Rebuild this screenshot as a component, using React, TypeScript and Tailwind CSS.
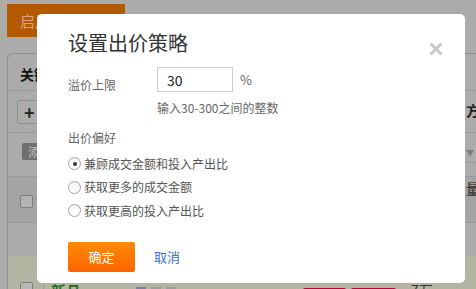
import React from 'react';

const Radio = ({ label, checked }: { label: string; checked?: boolean }) => (
  <label className="flex h-[23.5px] items-center">
    <span className="flex h-[13px] w-[13px] items-center justify-center rounded-full border border-[#a3a3a3] bg-gradient-to-b from-[#f4f4f4] to-white">
      {checked && <span className="h-[4px] w-[4px] rounded-full bg-[#333]" />}
    </span>
    <span className="ml-[3px] text-[12px] leading-[18px] text-[#555]">{label}</span>
  </label>
);

export default function App() {
  return (
    <div className="relative h-[289px] w-[476px] overflow-hidden bg-[#ababab] font-['Noto_Sans_CJK_SC',sans-serif]">
      {/* page behind the dialog (dimmed) */}
      <div className="flex h-[37px]">
        <div className="ml-[7px] mt-[4px] h-[33px] w-[118px] bg-[#b35900] pl-[13px] text-[15px] leading-[33px] text-[#d9a47a]">
          启用中
        </div>
      </div>
      <div className="ml-[7px] mt-[16px] rounded-tl-[6px] border-l border-t border-[#8e8e8e]">
        <div className="flex h-[37px] items-center border-b border-[#999] pl-[12px] pt-[4px]">
          <span className="text-[14px] font-bold text-[#111]">关键词</span>
        </div>
        <div className="flex h-[42px] justify-between border-b border-[#999]">
          <div className="ml-[9px] mt-[9px] flex h-[24px] w-[100px] items-center rounded-[3px] border border-[#8c8c8c] pl-[6px] text-[18px] font-bold leading-none text-[#222]">
            +
          </div>
          <span className="mt-[9px] w-[10px] overflow-hidden whitespace-nowrap text-[14px] font-bold text-[#222]">方式</span>
        </div>
        <div className="flex h-[43px] justify-between">
          <div className="ml-[14px] mt-[10px] h-[17px] w-[50px] rounded-[2px] bg-[#6e6e6e] pl-[6px] text-[12px] leading-[17px] text-[#c4c4c4]">
            添加
          </div>
          <div className="flex w-[10px] flex-col">
            <span className="mt-[16px] text-[8px] leading-none text-[#7c7c7c]">▼</span>
            <span className="mt-[5px] border-b border-[#999]" />
          </div>
        </div>
        <div className="flex h-[47px] justify-between border-y border-[#999] bg-[#a4a4a4]">
          <span className="ml-[12px] mt-[18px] h-[13px] w-[13px] rounded-[2px] border border-[#7e7e7e] bg-[#b3b3b3]" />
          <span className="mt-[1px] w-[10px] overflow-hidden text-[14px] font-bold text-[#444]">量</span>
        </div>
        <div className="h-[33px]" />
        <div className="flex h-[40px] bg-[#b4b4a2]">
          <span className="ml-[12px] mt-[26px] h-[13px] w-[13px] rounded-[2px] border border-[#7e7e7e] bg-[#b8b8b8]" />
          <span className="ml-[10px] border-l border-[#999]" />
          <span className="ml-[7px] mt-[24px] text-[15px] font-bold text-[#1e6a1e]">新品</span>
          <span className="ml-[55px] mt-[31px] h-[10px] w-[10px] bg-[#7b80a6]" />
          <span className="ml-[5px] mt-[31px] h-[10px] w-[10px] bg-[#9c9c9c]" />
          <span className="ml-[5px] mt-[31px] h-[10px] w-[10px] bg-[#9c9c9c]" />
          <span className="ml-[127px] mt-[32px] h-[10px] w-[43px] rounded-[2px] bg-[#c2003c]" />
          <span className="ml-[5px] mt-[32px] h-[10px] w-[45px] rounded-[2px] bg-[#c2003c]" />
          <span className="ml-[15px] mt-[24px] text-[14px] text-[#333]">7万</span>
        </div>
      </div>

      {/* dialog */}
      <div className="absolute left-[37px] top-[14px] h-[269px] w-[428px] rounded-[5px] bg-white pl-[31px] pt-[15px]">
        <button className="absolute right-[22px] top-[28px]">
          <svg width="14" height="14" viewBox="0 0 14 14">
            <path d="M1.5 1.5l11 11M12.5 1.5l-11 11" stroke="#c9c9c9" strokeWidth="3" />
          </svg>
        </button>

        <h2 className="text-[20px] leading-[28px] text-[#333]">设置出价策略</h2>

        <div className="mt-[10px] flex">
          <span className="mt-[9px] w-[89px] text-[12px] leading-[18px] text-[#666]">溢价上限</span>
          <div>
            <div className="flex items-center">
              <input
                className="h-[25px] w-[76px] border border-[#ccc] px-[9px] text-[14px] text-[#222] outline-none"
                value="30"
                readOnly
              />
              <span className="ml-[7px] text-[13px] text-[#666]">%</span>
            </div>
            <p className="mt-[7px] text-[12px] leading-[18px] text-[#666]">输入30-300之间的整数</p>
          </div>
        </div>

        <p className="mt-[12px] text-[12px] leading-[18px] text-[#666]">出价偏好</p>
        <div className="mt-[5px]">
          <Radio label="兼顾成交金额和投入产出比" checked />
          <Radio label="获取更多的成交金额" />
          <Radio label="获取更高的投入产出比" />
        </div>

        <div className="mt-[19px] flex items-center">
          <button className="h-[30px] w-[67px] rounded-[2px] bg-gradient-to-b from-[#ff8a00] to-[#ff6400] text-[13px] text-white">
            确定
          </button>
          <button className="ml-[19px] text-[13px] text-[#3b6fd6]">取消</button>
        </div>
      </div>
    </div>
  );
}
